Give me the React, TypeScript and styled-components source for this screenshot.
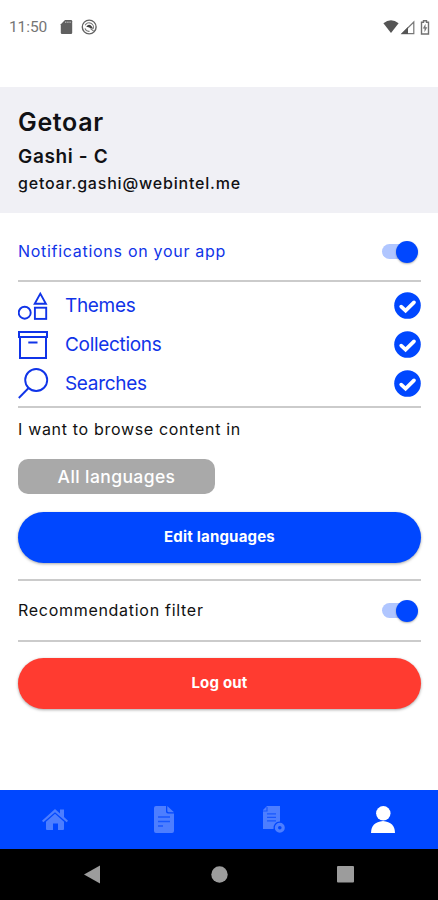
import React from "react";
import styled, { createGlobalStyle } from "styled-components";

const BLUE = "#0047ff";

const GlobalStyle = createGlobalStyle`
  * { box-sizing: border-box; }
  body { margin: 0; background: #fff; font-family: Inter, "Liberation Sans", sans-serif; }
  svg { display: block; flex: none; }
`;

const Screen = styled.div`
  display: flex;
  flex-direction: column;
  width: 438px;
  height: 900px;
  background: #fff;
  overflow: hidden;
`;

const StatusBar = styled.div`
  display: flex;
  justify-content: space-between;
  height: 87px;
  padding: 17px 7px 0 9px;
`;

const StatusGroup = styled.div`
  display: flex;
  height: 20px;
  align-items: center;
`;

const Clock = styled.span`
  width: 50px;
  font: 400 15.5px/20px Roboto, sans-serif;
  letter-spacing: -0.1px;
  color: #757575;
`;

const Profile = styled.header`
  height: 126px;
  padding: 18px 18px 0;
  background: #f0f0f5;
  color: #111114;
`;

const Line = styled.div<{ $size: number; $height: number; $weight: number; $spacing: number }>`
  font-size: ${(p) => p.$size}px;
  line-height: ${(p) => p.$height}px;
  font-weight: ${(p) => p.$weight};
  letter-spacing: ${(p) => p.$spacing}px;
  white-space: nowrap;
`;

const Content = styled.main`
  display: flex;
  flex-direction: column;
  flex: 1;
  padding: 0 17px 0 18px;
`;

const Setting = styled.section<{ $height: number; $offset: number; $color: string }>`
  display: flex;
  align-items: center;
  justify-content: space-between;
  height: ${(p) => p.$height}px;
  padding: ${(p) => p.$offset}px 3px 0 0;
  color: ${(p) => p.$color};
`;

const SettingLabel = styled.span`
  padding-bottom: 2px;
  font-size: 16px;
  line-height: 20px;
  letter-spacing: 0.71px;
`;

const Rule = styled.div`
  height: 2px;
  flex: none;
  background: #cbcbcb;
`;

const Track = styled.span`
  display: flex;
  align-items: center;
  justify-content: flex-end;
  width: 33px;
  height: 15px;
  margin-right: 3px;
  border-radius: 8px;
  background: #b0c6ff;
`;

const Thumb = styled.span`
  width: 22px;
  height: 22px;
  flex: none;
  margin-right: -3px;
  border-radius: 50%;
  background: ${BLUE};
  box-shadow: 0 1px 2px rgba(0, 0, 0, 0.3);
`;

const Topics = styled.ul`
  height: 124px;
  margin: 0;
  padding: 4px 0 0;
  list-style: none;
`;

const Topic = styled.li`
  display: grid;
  grid-template-columns: 47px 1fr 27px;
  align-items: center;
  height: 39px;
  color: #1034e8;
`;

const TopicName = styled.span`
  font-size: 19px;
  line-height: 24px;
  letter-spacing: -0.32px;
`;

const BrowseLabel = styled.div`
  height: 51px;
  padding-top: 11px;
  font-size: 16px;
  line-height: 20px;
  letter-spacing: 0.68px;
  color: #111;
`;

const LanguageTag = styled.div`
  width: 197px;
  height: 35px;
  border-radius: 10px;
  background: #a9a9a9;
  color: #fff;
  font-size: 17.5px;
  font-weight: 500;
  line-height: 35px;
  letter-spacing: 0.4px;
  text-align: center;
`;

const Button = styled.button<{ $color: string; $top: number; $bottom: number }>`
  height: 51px;
  flex: none;
  margin: ${(p) => p.$top}px 0 ${(p) => p.$bottom}px;
  padding: 0 0 1px;
  border: 0;
  border-radius: 26px;
  background: ${(p) => p.$color};
  box-shadow: 0 1px 3px rgba(0, 0, 0, 0.35);
  color: #fff;
  font: 700 15px/20px Inter, sans-serif;
  letter-spacing: 0.2px;
`;

const TabBar = styled.nav`
  display: grid;
  grid-template-columns: repeat(4, 1fr);
  place-items: center;
  height: 59px;
  background: ${BLUE};
`;

const Tab = styled.span<{ $active?: boolean }>`
  color: ${(p) => (p.$active ? "#fff" : "#4d7eff")};
`;

const SystemBar = styled.footer`
  display: flex;
  align-items: center;
  justify-content: space-between;
  height: 51px;
  padding: 0 84px 0 84px;
  background: #000;
  color: #9c9c9c;
`;

const Toggle = () => (
  <Track role="switch" aria-checked="true">
    <Thumb />
  </Track>
);

const Check = () => (
  <svg width="27" height="27" viewBox="0 0 27 27">
    <circle cx="13.5" cy="13.5" r="13.3" fill={BLUE} />
    <path d="M7.2 14.6l4.4 4L20 10.4" fill="none" stroke="#fff" strokeWidth="3.7" strokeLinecap="round" />
  </svg>
);

const ShapesIcon = () => (
  <svg width="31" height="30" viewBox="0 0 31 30" fill="none" stroke="#1034e8" strokeWidth="1.9">
    <path d="M22.3 2.6l5.6 10.2H16.7z" />
    <circle cx="6.7" cy="21.7" r="6" />
    <rect x="16.9" y="16.7" width="11.3" height="11.2" />
  </svg>
);

const ArchiveIcon = () => (
  <svg width="31" height="30" viewBox="0 0 31 30" fill="none" stroke="#1034e8" strokeWidth="2">
    <path d="M1 2h28v5H1zM2 7v21h26V7M10.3 12.5h9.2" />
  </svg>
);

const SearchIcon = () => (
  <svg width="31" height="32" viewBox="0 0 31 32" fill="none" stroke="#1034e8" strokeWidth="1.9">
    <circle cx="18.2" cy="12" r="11" />
    <path d="M10.6 20L.8 30" />
  </svg>
);

const topics = [
  { name: "Themes", icon: <ShapesIcon /> },
  { name: "Collections", icon: <ArchiveIcon /> },
  { name: "Searches", icon: <SearchIcon /> },
];

export default function App() {
  return (
    <>
      <GlobalStyle />
      <Screen>
        <StatusBar>
          <StatusGroup>
            <Clock>11:50</Clock>
            <svg width="41" height="18" viewBox="0 0 41 18">
              <path d="M6 2h6q1.2 0 1.2 1.2v11.6q0 1.2-1.2 1.2H3q-1.2 0-1.2-1.2V6.2z" fill="#606060" />
              <path d="M6 4.2h6" stroke="#aaa" strokeWidth="1.4" strokeDasharray="1.4 .8" />
              <circle cx="30.2" cy="9" r="6.9" fill="none" stroke="#626262" strokeWidth="1.4" />
              <path d="M26.2 7.3a4.3 4.3 0 0 1 7.8 3.8M26 10.4a4.3 4.3 0 0 0 4.6 2.9M31.5 10.5l3.4 2.8" fill="none" stroke="#777" strokeWidth="1.1" />
              <path d="M27.2 8.7q3-4 6 .3l.8 1.8-2.8-.9-1.6-.6z" fill="#404040" />
            </svg>
          </StatusGroup>
          <StatusGroup>
            <svg width="48" height="18" viewBox="0 0 48 18">
              <path d="M.4 5.2q7.6-6 15.2 0L8 15z" fill="#555" />
              <path d="M19.1 15.6L30.8 4v11.6z" fill="none" stroke="#777" strokeWidth="1.2" />
              <path d="M18 16l7-7v7z" fill="#555" />
              <path d="M38.5 4.2h2V2.8h3v1.4h2V16h-7z" fill="#fff" stroke="#707070" strokeWidth="1.4" />
              <path d="M42.5 5.8l-2.7 4.7h1.7v3.7l2.8-5h-1.8z" fill="#777" />
            </svg>
          </StatusGroup>
        </StatusBar>

        <Profile>
          <Line $size={25} $height={35} $weight={600} $spacing={0.65}>Getoar</Line>
          <Line $size={19} $height={33} $weight={600} $spacing={0.65}>Gashi - C</Line>
          <Line $size={16} $height={20} $weight={500} $spacing={0.8}>getoar.gashi@webintel.me</Line>
        </Profile>

        <Content>
          <Setting $height={67} $offset={10} $color="#1034e8">
            <SettingLabel>Notifications on your app</SettingLabel>
            <Toggle />
          </Setting>
          <Rule />
          <Topics>
            {topics.map((topic) => (
              <Topic key={topic.name}>
                {topic.icon}
                <TopicName>{topic.name}</TopicName>
                <Check />
              </Topic>
            ))}
          </Topics>
          <Rule />
          <BrowseLabel>I want to browse content in</BrowseLabel>
          <LanguageTag>All languages</LanguageTag>
          <Button $color={BLUE} $top={18} $bottom={16}>Edit languages</Button>
          <Rule />
          <Setting $height={59} $offset={0} $color="#111">
            <SettingLabel>Recommendation filter</SettingLabel>
            <Toggle />
          </Setting>
          <Rule />
          <Button $color="#ff3b30" $top={16} $bottom={0}>Log out</Button>
        </Content>

        <TabBar>
          <Tab>
            <svg width="26" height="24" viewBox="0 0 26 24" fill="currentColor">
              <path d="M13 1l5 4.4V1.5h4v7.4l4 3.8-1.3 1.5L13 4.2 1.3 14.2 0 12.7z" />
              <path d="M13 5.8l9 8V21q0 1-1 1h-5v-6.5h-5V22H5q-1 0-1-1v-7.2z" />
            </svg>
          </Tab>
          <Tab>
            <svg width="20" height="27" viewBox="0 0 20 27">
              <path d="M2 0h10v5.5q0 2 2 2h6V25q0 2-2 2H2q-2 0-2-2V2q0-2 2-2zM13.3 0L20 6.3h-5.2q-1.5 0-1.5-1.5z" fill="currentColor" />
              <path d="M4 11h12M4 15.5h12M4 20h5" stroke={BLUE} strokeWidth="1.4" opacity=".7" />
            </svg>
          </Tab>
          <Tab>
            <svg width="24" height="28" viewBox="0 0 24 28">
              <path d="M5 0h13v15.5a6.3 6.3 0 0 0-6.5 7.5H1V4l4-4z" fill="currentColor" />
              <path d="M1 5h4V1M5 7.8h9M5 11.3h9M5 14.8h9" fill="none" stroke={BLUE} strokeWidth="1.2" opacity=".7" />
              <circle cx="17.8" cy="21.8" r="3.4" fill="none" stroke="currentColor" strokeWidth="3.2" />
            </svg>
          </Tab>
          <Tab $active>
            <svg width="24" height="28" viewBox="0 0 24 28" fill="currentColor">
              <circle cx="12.3" cy="7.3" r="7.2" />
              <path d="M0 27q0-11 12-12 12 1 12 12z" />
            </svg>
          </Tab>
        </TabBar>
        <SystemBar>
          <svg width="17" height="19" viewBox="0 0 17 19"><path d="M0 9.5L16 .5v18z" fill="currentColor" /></svg>
          <svg width="17" height="17" viewBox="0 0 17 17"><circle cx="8.5" cy="8.5" r="8.2" fill="currentColor" /></svg>
          <svg width="17" height="17" viewBox="0 0 17 17"><rect width="17" height="16.5" rx="1" fill="currentColor" /></svg>
        </SystemBar>
      </Screen>
    </>
  );
}
